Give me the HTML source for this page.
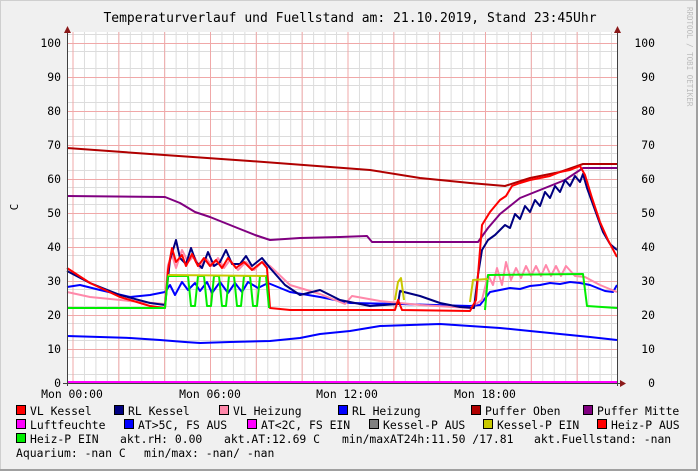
<!DOCTYPE html>
<html><head><meta charset="utf-8"><style>
html,body{margin:0;padding:0;background:#f0f0f0}
svg{display:block}
text{font-family:"DejaVu Sans Mono","Liberation Mono",monospace;fill:#000}
</style></head><body>
<svg width="698" height="471" viewBox="0 0 698 471" xmlns="http://www.w3.org/2000/svg">
<defs>
<pattern id="mv" patternUnits="userSpaceOnUse" x="72.5" y="0" width="11.458" height="400"><line x1="0.5" y1="0" x2="0.5" y2="400" stroke="#dcdcdc" stroke-width="1"/></pattern>
<pattern id="mh" patternUnits="userSpaceOnUse" x="0" y="0" width="700" height="17"><line x1="0" y1="0.5" x2="700" y2="0.5" stroke="#dcdcdc" stroke-width="1"/></pattern>
<pattern id="Mv" patternUnits="userSpaceOnUse" x="72.5" y="0" width="45.833" height="400"><line x1="0.5" y1="0" x2="0.5" y2="400" stroke="#f0a8a8" stroke-width="1"/></pattern>
<pattern id="Mh" patternUnits="userSpaceOnUse" x="0" y="9" width="700" height="34"><line x1="0" y1="0.5" x2="700" y2="0.5" stroke="#f0a8a8" stroke-width="1"/></pattern>
</defs>
<rect x="0" y="0" width="698" height="471" fill="#f0f0f0"/>
<rect x="0.5" y="0.5" width="697" height="470" fill="none" stroke="#cfcfcf"/>
<line x1="697" y1="0" x2="697" y2="471" stroke="#a0a0a0" stroke-width="2"/>
<line x1="0" y1="470" x2="698" y2="470" stroke="#a0a0a0" stroke-width="2"/>
<rect x="67" y="32" width="550" height="351" fill="#fff"/>
<rect x="67" y="32" width="550" height="351" fill="url(#mv)"/>
<rect x="67" y="32" width="550" height="351" fill="url(#mh)"/>
<rect x="67" y="32" width="550" height="351" fill="url(#Mv)"/>
<rect x="67" y="32" width="550" height="351" fill="url(#Mh)"/>
<text x="350" y="22" font-size="13" text-anchor="middle">Temperaturverlauf und Fuellstand am: 21.10.2019, Stand 23:45Uhr</text>
<text transform="translate(687,7) rotate(90)" font-size="7.5" style="fill:#bcbcbc">RRDTOOL / TOBI OETIKER</text>
<g font-size="11.4" text-anchor="end">
<text x="61" y="47">100</text><text x="61" y="81">90</text><text x="61" y="115">80</text><text x="61" y="149">70</text><text x="61" y="183">60</text><text x="61" y="217">50</text><text x="61" y="251">40</text><text x="61" y="285">30</text><text x="61" y="319">20</text><text x="61" y="353">10</text><text x="61" y="387">0</text>
<text x="655" y="47">100</text><text x="655" y="81">90</text><text x="655" y="115">80</text><text x="655" y="149">70</text><text x="655" y="183">60</text><text x="655" y="217">50</text><text x="655" y="251">40</text><text x="655" y="285">30</text><text x="655" y="319">20</text><text x="655" y="353">10</text><text x="655" y="387">0</text>
</g>
<text transform="translate(18,207) rotate(-90)" font-size="11" text-anchor="middle">C</text>
<g font-size="11.4" text-anchor="middle">
<text x="72" y="398">Mon 00:00</text><text x="210" y="398">Mon 06:00</text><text x="347" y="398">Mon 12:00</text><text x="485" y="398">Mon 18:00</text>
</g>
<g fill="none" stroke-width="2" stroke-linejoin="round">
<!-- AT -->
<polyline stroke="#0000ff" points="67,336 100,337 130,338 160,340 185,342 200,343 230,342 270,341 300,338 320,334 350,331 380,326 410,325 440,324 470,326 500,328 530,331 560,334 590,337 617,340"/>
<!-- Puffer Oben -->
<polyline stroke="#b00000" points="67,148 150,154 250,161 370,170 420,178 470,183 505,186 530,178 560,172 583,164 617,164"/>
<!-- Puffer Mitte -->
<polyline stroke="#800080" points="67,196 165,197 180,203 195,212 210,217 225,223 240,229 255,235 270,240 300,238 340,237 367,236 372,242 478,242 488,228 500,214 520,198 545,188 565,180 583,168 617,168"/>
<!-- RL Heizung -->
<polyline stroke="#0000ff" points="67,287 80,285 100,290 130,297 150,295 165,292 170,285 175,295 182,282 188,290 195,283 200,291 207,282 212,293 220,282 228,293 235,283 242,292 248,282 258,288 268,283 290,292 320,297 350,303 400,304 470,306 480,305 490,292 500,290 510,288 520,289 530,286 540,285 550,283 560,284 570,282 580,283 590,285 605,291 613,292 617,285"/>
<!-- VL Heizung -->
<polyline stroke="#ff88aa" points="67,292 90,297 130,301 165,304 168,265 172,255 176,268 182,250 188,262 194,256 200,268 206,258 212,266 218,258 224,268 230,260 238,270 246,262 254,270 262,262 270,266 290,285 320,294 345,304 352,296 380,301 420,305 470,308 482,300 488,275 493,285 497,268 502,285 506,262 511,280 516,268 521,278 526,266 531,276 536,266 541,276 546,265 551,276 556,266 561,276 566,266 575,276 585,277 600,285 617,292"/>
<!-- RL Kessel -->
<polyline stroke="#000080" points="67,271 90,283 120,295 150,303 165,305 170,260 176,240 180,258 186,264 191,248 196,262 202,268 208,252 214,266 220,262 226,250 232,264 240,264 246,256 252,266 262,258 270,268 285,285 300,295 320,290 340,300 370,306 398,304 400,291 420,296 440,303 460,307 474,308 478,275 482,250 488,240 495,235 500,230 505,225 510,228 515,214 520,219 525,206 530,212 535,200 540,206 545,192 550,198 555,186 560,192 565,180 570,186 575,176 580,182 583,174 587,188 595,210 603,232 610,244 617,250"/>
<!-- VL Kessel -->
<polyline stroke="#ff0000" points="67,268 90,283 120,297 150,306 165,308 168,270 172,248 176,262 182,255 186,266 192,254 198,266 204,258 210,266 216,260 222,268 228,258 236,268 244,262 252,270 262,262 267,268 270,308 290,310 395,310 398,300 402,310 470,311 476,300 482,225 490,212 500,200 506,196 512,186 520,183 530,180 540,178 550,176 560,172 570,170 580,166 585,175 592,198 600,222 608,240 617,257"/>
<!-- Heiz-P EIN green -->
<polyline stroke="#00ee00" points="67,308 165,308 168,276 188,276 191,306 195,306 198,276 204,276 207,306 211,306 214,276 219,276 222,306 226,306 229,276 234,276 237,306 241,306 244,276 250,276 253,306 257,306 260,276 266,276 269,308"/>
<polyline stroke="#00ee00" points="485,310 488,275 583,274 587,306 617,308"/>
<!-- Kessel-P EIN yellow -->
<polyline stroke="#c8c800" points="168,275 266,276"/>
<polyline stroke="#c8c800" points="395,300 398,282 401,278 404,300"/>
<polyline stroke="#c8c800" points="470,302 473,280 488,279"/>
<!-- Luftfeuchte -->
<line x1="67" y1="382" x2="617" y2="382" stroke="#ff00ff"/>
</g>
<g stroke="#404040" stroke-width="1">
<line x1="67.5" y1="30" x2="67.5" y2="386"/>
<line x1="617.5" y1="30" x2="617.5" y2="386"/>
<line x1="63" y1="383.5" x2="622" y2="383.5"/>
</g>
<polygon points="64,33 71,33 67.5,26" fill="#8b1a1a"/>
<polygon points="614,33 621,33 617.5,26" fill="#8b1a1a"/>
<polygon points="620,380 620,387 626,383.5" fill="#8b1a1a"/>
<g stroke="#000" stroke-width="1">
<rect x="16.5" y="405.5" width="9" height="9" fill="#ff0000"/>
<rect x="114.5" y="405.5" width="9" height="9" fill="#000080"/>
<rect x="219.5" y="405.5" width="9" height="9" fill="#ff88aa"/>
<rect x="338.5" y="405.5" width="9" height="9" fill="#0000ff"/>
<rect x="471.5" y="405.5" width="9" height="9" fill="#b00000"/>
<rect x="583.5" y="405.5" width="9" height="9" fill="#800080"/>
<rect x="16.5" y="419.5" width="9" height="9" fill="#ff00ff"/>
<rect x="124.5" y="419.5" width="9" height="9" fill="#0000ff"/>
<rect x="247.5" y="419.5" width="9" height="9" fill="#ff00ff"/>
<rect x="369.5" y="419.5" width="9" height="9" fill="#808080"/>
<rect x="483.5" y="419.5" width="9" height="9" fill="#c8c800"/>
<rect x="597.5" y="419.5" width="9" height="9" fill="#ff0000"/>
<rect x="16.5" y="433.5" width="9" height="9" fill="#00ee00"/>
</g>
<g font-size="11.4">
<text x="30" y="415" xml:space="preserve">VL Kessel</text>
<text x="128" y="415">RL Kessel</text>
<text x="233" y="415">VL Heizung</text>
<text x="352" y="415">RL Heizung</text>
<text x="485" y="415">Puffer Oben</text>
<text x="597" y="415">Puffer Mitte</text>
<text x="30" y="429">Luftfeuchte</text>
<text x="138" y="429">AT&gt;5C, FS AUS</text>
<text x="261" y="429">AT&lt;2C, FS EIN</text>
<text x="383" y="429">Kessel-P AUS</text>
<text x="497" y="429">Kessel-P EIN</text>
<text x="611" y="429">Heiz-P AUS</text>
<text x="30" y="443">Heiz-P EIN</text>
<text x="120" y="443">akt.rH: 0.00</text>
<text x="224" y="443">akt.AT:12.69 C</text>
<text x="342" y="443">min/maxAT24h:11.50 /17.81</text>
<text x="534" y="443">akt.Fuellstand: -nan</text>
<text x="16" y="457">Aquarium: -nan C</text>
<text x="144" y="457">min/max: -nan/ -nan</text>
</g>
</svg>
</body></html>
